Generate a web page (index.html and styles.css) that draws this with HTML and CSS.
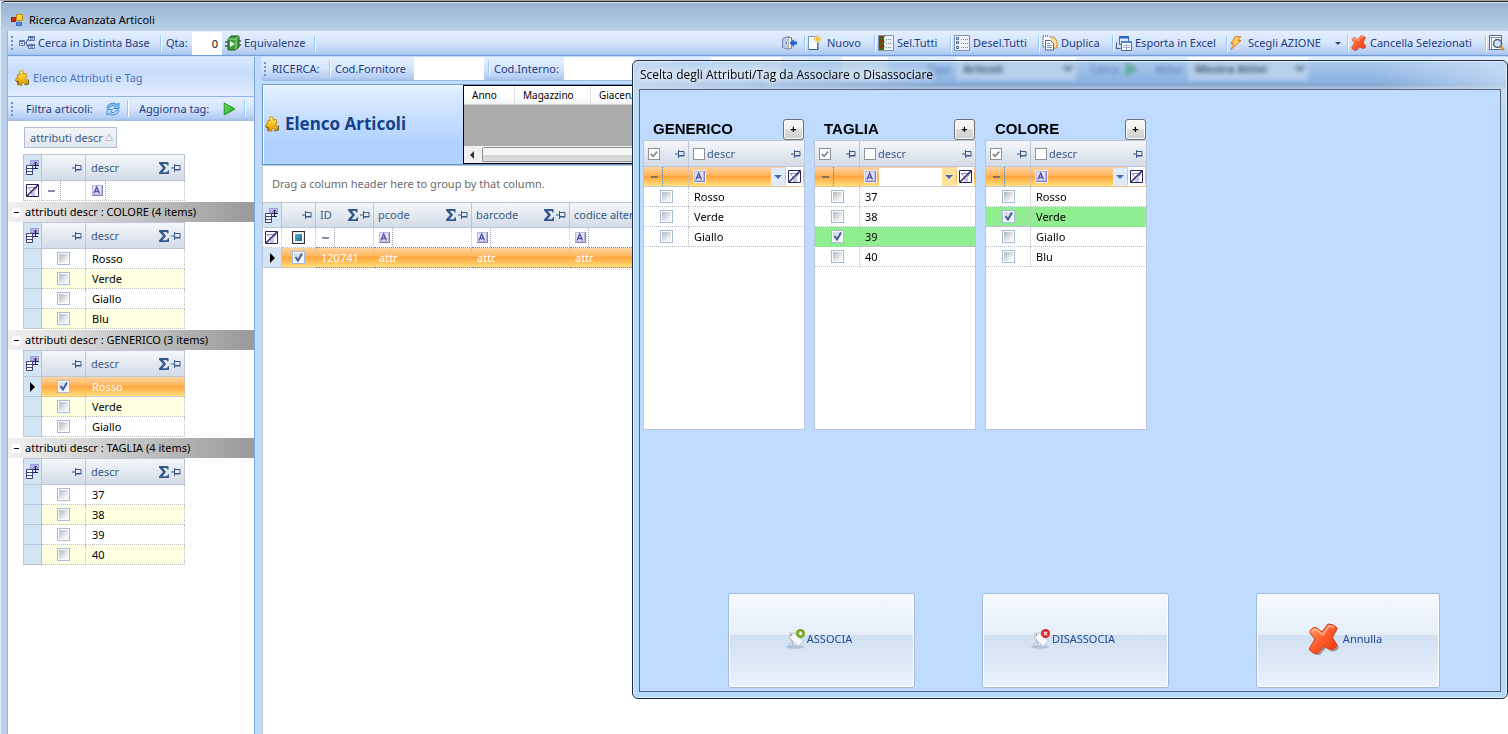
FILE: index.html
```html
<!DOCTYPE html>
<html lang="it">
<head>
<meta charset="utf-8">
<title>Ricerca Avanzata Articoli</title>
<link rel="stylesheet" href="styles.css">
</head>
<body>
<svg class="defs" aria-hidden="true">
  <defs>
    <linearGradient id="gold" x1="0" y1="0" x2="0" y2="1"><stop offset="0" stop-color="#ffec70"/><stop offset=".5" stop-color="#f7c31e"/><stop offset="1" stop-color="#cf9206"/></linearGradient>
    <linearGradient id="red" x1="0" y1="0" x2="1" y2="1"><stop offset="0" stop-color="#ffb27a"/><stop offset=".5" stop-color="#ff5a2a"/><stop offset="1" stop-color="#f03a0c"/></linearGradient>
    <linearGradient id="green" x1="0" y1="0" x2="1" y2="1"><stop offset="0" stop-color="#7be07b"/><stop offset="1" stop-color="#149a14"/></linearGradient>
    <symbol id="pin" viewBox="0 0 10 8"><path d="M0 4h3M3.500 0v8M4 1.500h5v4H4M4 6h5.500" fill="none" stroke="#3b5b85"/></symbol>
    <symbol id="sum" viewBox="0 0 10 12"><path d="M0 0h9.500v3.500H8.500L7.500 2H4l3 4-3.500 4.200h4.500l1-2H10V12H0v-1.500L4 6 0 1.500z" fill="#35598a"/></symbol>
    <symbol id="chooser" viewBox="0 0 14 15"><path d="M4.500 .5h8v4h-8z" fill="#b9b4e8" stroke="#a09bd8"/><path d="M3.500 5.500H13" stroke="#222255"/><path d="M.5 5.500h6v9h-6z" fill="#fff" stroke="#45407f"/><path d="M1 8.500h5M1 11.500h5" stroke="#45407f"/><path d="M7 8.500h5M9.500 2v6M8 3.500l1.500-1.500L11 3.500" fill="none" stroke="#222255"/></symbol>
    <symbol id="clear" viewBox="0 0 13 13"><path d="M.5 .5h12v12H.5z" fill="#fff" stroke="#26225c"/><path d="M2 3.500h9L8 7.500V12M6 12V8L2 3.500" fill="none" stroke="#8f8ccb"/><path d="M1 12L12 1" stroke="#26225c" stroke-width="1.400"/></symbol>
    <symbol id="alpha" viewBox="0 0 11 11"><path d="M.5 .5h9v9h-9z" fill="#e2e1f5" stroke="#b9b8dd"/><path d="M2 8.500L4.700 2 7.500 8.500M3 6.500h3.500" fill="none" stroke="#5552a5" stroke-width="1.400"/><path d="M0 10.500h11M10.500 0v11" stroke="#8380c0"/></symbol>
    <symbol id="puzzle" viewBox="0 0 14 16"><path d="M2.500 6.500L2 5l3.200-.6C3.500 2.200 4.500.6 6.300.6S9 2.300 8 4l3.300-.5.7 3.800c-2.300-.4-2.600 2.700-.3 2.600l1.600-.3.200 4.200-3.900.8c.6-2.500-2.800-2.800-2.700-.3l.2 1-4.300-.5.5-3.200c-1.700.4-3-.5-2.600-2S1.600 7.800 2.500 8.300z" fill="url(#gold)" stroke="#b47b08" stroke-width=".8"/><path d="M2.800 14.800l.5-3.200M.8 10.400Q1.600 12 3.300 11.600" fill="none" stroke="#8a3d0c"/><path d="M9.800 14.800l3.700-.8v-4" fill="none" stroke="#6b5c2c"/></symbol>
    <symbol id="cross" viewBox="0 0 30 32"><path d="M2 8Q5 4 8 6l5 3 6-8q6 0 9 4l-5 9 6 9q-3 6-8 4l-5-3-6 7q-6 1-9-4l6-10-6-7q-1-1-1-2z" transform="translate(1 1)" fill="#7d5349" opacity=".55"/><path d="M1 8Q4 3 8 5l5 4 6-8q6 0 9 4l-5 9 5 8q-3 6-8 4l-5-3-6 7q-6 1-9-4l6-10-5-6z" fill="url(#red)" stroke="#d9381a"/><path d="M3 8q3-2 5-1l6 5 6-9q4 0 5 2" fill="none" stroke="#ffc6a3" stroke-width="1.500" opacity=".8"/></symbol>
    <symbol id="play" viewBox="0 0 12 14"><path d="M.7 1v12L11.500 7z" fill="url(#green)" stroke="#1d9420"/></symbol>
    <symbol id="tag" viewBox="0 0 19 20"><ellipse cx="9" cy="18" rx="9" ry="1.800" fill="#9fb0c4" opacity=".6"/><path d="M3.500 4h5l9 8-5.500 5.500-8-8z" fill="#f4f7fb" stroke="#b5bfcb"/><path d="M5 14c-4 1-3 5 0 3.500s1-5-.5-8" fill="none" stroke="#a9b5c2"/><circle cx="5.500" cy="6" r=".8" fill="#555"/></symbol>
  </defs>
</svg>

<div class="window">
  <header class="titlebar">
    <svg width="13" height="12" viewBox="0 0 13 12"><path d="M5.500.5h6v6h-6z" fill="#ffcf3f" stroke="#b98a12"/><path d="M.5 3.500h4v4h-4z" fill="#d43416" stroke="#8f1b08"/><path d="M5.500 8.500h5v3h-5z" fill="#5f94e8" stroke="#3468b8"/></svg>
    <h1>Ricerca Avanzata Articoli</h1>
  </header>

  <div class="frame">
    <nav class="toolbar main-bar">
      <i class="grip"></i>
      <button class="tool w-distinta"><svg width="16" height="14" viewBox="0 0 16 14"><path d="M.5 4.500h5v5h-5zM9.500 .5h6v4h-6zM9.500 8.500h6v4h-6z" fill="#dbe8fb" stroke="#5a77ac"/><path d="M1 5.500h4M10 1.500h5M10 9.500h5" stroke="#5a77ac"/><path d="M2 7.500h2M11 3h3M11 11h3" stroke="#2f5fa8"/><path d="M6 7h1l2-4M7 7l2 4" fill="none" stroke="#555"/></svg>Cerca in Distinta Base</button>
      <i class="sep"></i>
      <label class="tool-label" for="qta">Qta:</label>
      <input id="qta" class="qty" type="text" value="0">
      <button class="tool w-equiv"><svg width="16" height="16" viewBox="0 0 16 16"><path d="M3 4l3-3h8v11l-3 3H3z" fill="#3f9a3f" stroke="#165c1c"/><path d="M3 4h8v11M11 4l3-3" fill="none" stroke="#9bdb8f"/><path d="M5 6v6l5-3z" fill="#e9ffe2"/><path d="M0 7h3M0 11h3M14 6h2M14 10h2" stroke="#555" stroke-width="1.500"/></svg>Equivalenze</button>
      <i class="sep"></i>
      <div class="actions">
        <button class="tool w-exit" aria-label="Esci"><svg width="16" height="16" viewBox="0 0 16 16"><path d="M1.500 3.500l6-2v13l-6-2z" fill="#b9cdec" stroke="#7188b8"/><path d="M7.500 2.500h3v11h-3" fill="#f5ecc0" stroke="#8f865e"/><path d="M5 8h1" stroke="#333"/><path d="M16 6.500h-3V4L8.500 8 13 12V9.500h3z" fill="#1c60dd"/></svg></button>
        <i class="sep"></i>
        <button class="tool w-nuovo"><svg width="14" height="16" viewBox="0 0 14 16"><path d="M.5 1.500h9v13h-9z" fill="#f4f8ff" stroke="#8194b6"/><path d="M.5 14.500h9.500V5" fill="none" stroke="#475a82"/><circle cx="9.500" cy="4" r="3" fill="#ffe98d"/><path d="M9.500 0v8M5.500 4h8M7 1.500l5 5M12 1.500l-5 5" stroke="#f1b92c"/></svg>Nuovo</button>
        <i class="sep"></i>
        <button class="tool w-sel"><svg width="16" height="16" viewBox="0 0 16 16"><path d="M.5 .5h15v15H.5z" fill="#eef3fb" stroke="#8791a5"/><path d="M1 1h5v14H1z" fill="#9b2d10"/><path d="M1.500 3l1.500 1.500L6.500 1M1.500 8l1.500 1.500L6.500 6M1.500 13l1.500 1.500L6.500 11" fill="none" stroke="#2c7c20" stroke-width="1.500"/><path d="M8 4.500h6M8 8.500h6M8 12.500h6" stroke="#7d8797" stroke-dasharray="1 1"/></svg>Sel.Tutti</button>
        <i class="sep"></i>
        <button class="tool w-desel"><svg width="16" height="16" viewBox="0 0 16 16"><path d="M.5 .5h15v15H.5z" fill="#eef3fb" stroke="#8791a5"/><path d="M2.500 2.500h2v2h-2zM2.500 6.500h2v2h-2zM2.500 11.500h2v2h-2z" fill="#fff" stroke="#40659d"/><path d="M7 4.500h7M7 8.500h7M7 12.500h7" stroke="#7d8797" stroke-dasharray="1 1"/></svg>Desel.Tutti</button>
        <i class="sep"></i>
        <button class="tool w-dup"><svg width="16" height="16" viewBox="0 0 16 16"><path d="M1 1h6l3 3v8H1z" fill="#fff" stroke="#222" stroke-dasharray="1 1"/><path d="M9 2h3l3 4v7h-4" fill="#ffe09a" stroke="#c08a30"/><path d="M3.500 5.500h5l3 3v6.500h-8z" fill="#f7faff" stroke="#52658b"/><path d="M5 8.500h3M5 10.500h5M5 12.500h5" stroke="#7890b8"/></svg>Duplica</button>
        <i class="sep"></i>
        <button class="tool w-excel"><svg width="16" height="15" viewBox="0 0 16 15"><path d="M3.500.5h9v8h-9z" fill="#dceaff" stroke="#3a68b5"/><path d="M3 1.500h10" stroke="#2e63c4" stroke-width="2"/><path d="M.5 6.500v6h4" fill="none" stroke="#556"/><path d="M5.500 5.500h10v9h-10z" fill="#fff" stroke="#52658b"/><path d="M5 6h11" stroke="#4f83d2" stroke-width="2"/><path d="M7 9.500h7M7 11.500h7M10.500 8v6" stroke="#9db0ce"/></svg>Esporta in Excel</button>
        <i class="sep"></i>
        <button class="tool w-azione"><svg width="12" height="14" viewBox="0 0 12 14"><path d="M5 1l6-1-3 4.500h3L1 13.500 4 7.500H1z" fill="#ffd65a" stroke="#e0702a"/></svg>Scegli AZIONE<b class="down"></b></button>
        <i class="sep"></i>
        <button class="tool w-canc"><svg width="16" height="16"><use href="#cross"/></svg>Cancella Selezionati</button>
        <i class="sep"></i>
        <button class="tool w-find" aria-label="Anteprima"><svg width="16" height="16" viewBox="0 0 16 16"><path d="M.5 .5h12v14H.5z" fill="#fff" stroke="#5b6a86"/><path d="M1 2.500h11M2.500 3v11" stroke="#8796b1"/><circle cx="8.500" cy="8.500" r="4" fill="#cfe4f8" stroke="#4b5d7c" stroke-width="1.500"/><path d="M11.500 11.500l3.500 3.500" stroke="#d19531" stroke-width="2.500"/></svg></button>
      </div>
    </nav>

    <div class="body">
      <aside class="side">
        <h2 class="side-title"><svg width="14" height="16"><use href="#puzzle"/></svg>Elenco Attributi e Tag</h2>
        <div class="toolbar side-bar">
          <i class="grip"></i>
          <button class="tool w-filtra">Filtra articoli:<svg width="16" height="16" viewBox="0 0 16 16"><path d="M2 7a6 5.500 0 0 1 10-3.500L14 2v5.500H8.500L10.500 5A4 3.500 0 0 0 4.500 7z" fill="#85c4f5" stroke="#2f78c4" stroke-width=".8"/><path d="M14 9a6 5.500 0 0 1-10 3.500L2 14V8.500h5.500L5.500 11a4 3.500 0 0 0 6-2z" fill="#b5dcfa" stroke="#2f78c4" stroke-width=".8"/></svg></button>
          <i class="sep"></i>
          <button class="tool w-aggiorna">Aggiorna tag:<svg width="13" height="14"><use href="#play"/></svg></button>
          <i class="sep"></i>
        </div>
        <div class="side-body">
          <button class="chip">attributi descr<svg width="8" height="7" viewBox="0 0 8 7"><path d="M4 .5L7.500 6.500H.5z" fill="#f4f6f9" stroke="#b8c0cc"/></svg></button>
          <table class="grid side-grid">
            <colgroup><col class="c-row"><col class="c-check"><col></colgroup>
            <thead><tr><th><svg width="14" height="15"><use href="#chooser"/></svg></th><th><div class="hd"><svg class="pin" width="10" height="8"><use href="#pin"/></svg></div></th><th><div class="hd">descr<svg class="sum" width="10" height="12"><use href="#sum"/></svg><svg width="10" height="8"><use href="#pin"/></svg></div></th></tr></thead>
            <tbody><tr><td class="plain"><svg width="13" height="13"><use href="#clear"/></svg></td><td><div class="op"><i class="minus"></i></div></td><td><div class="op"><svg width="11" height="11"><use href="#alpha"/></svg></div></td></tr></tbody>
          </table>

          <button class="group"><i class="collapse"></i>attributi descr : COLORE (4 items)</button>
          <table class="grid side-grid">
            <colgroup><col class="c-row"><col class="c-check"><col></colgroup>
            <thead><tr><th><svg width="14" height="15"><use href="#chooser"/></svg></th><th><div class="hd"><svg class="pin" width="10" height="8"><use href="#pin"/></svg></div></th><th><div class="hd">descr<svg class="sum" width="10" height="12"><use href="#sum"/></svg><svg width="10" height="8"><use href="#pin"/></svg></div></th></tr></thead>
            <tbody>
              <tr><td></td><td><input type="checkbox" id="c1"></td><td><label for="c1">Rosso</label></td></tr>
              <tr class="alt"><td></td><td><input type="checkbox" id="c2"></td><td><label for="c2">Verde</label></td></tr>
              <tr><td></td><td><input type="checkbox" id="c3"></td><td><label for="c3">Giallo</label></td></tr>
              <tr class="alt"><td></td><td><input type="checkbox" id="c4"></td><td><label for="c4">Blu</label></td></tr>
            </tbody>
          </table>

          <button class="group"><i class="collapse"></i>attributi descr : GENERICO (3 items)</button>
          <table class="grid side-grid">
            <colgroup><col class="c-row"><col class="c-check"><col></colgroup>
            <thead><tr><th><svg width="14" height="15"><use href="#chooser"/></svg></th><th><div class="hd"><svg class="pin" width="10" height="8"><use href="#pin"/></svg></div></th><th><div class="hd">descr<svg class="sum" width="10" height="12"><use href="#sum"/></svg><svg width="10" height="8"><use href="#pin"/></svg></div></th></tr></thead>
            <tbody>
              <tr class="current"><td><i class="cursor"></i></td><td><input type="checkbox" id="g1" checked></td><td><label for="g1">Rosso</label></td></tr>
              <tr class="alt"><td></td><td><input type="checkbox" id="g2"></td><td><label for="g2">Verde</label></td></tr>
              <tr><td></td><td><input type="checkbox" id="g3"></td><td><label for="g3">Giallo</label></td></tr>
            </tbody>
          </table>

          <button class="group"><i class="collapse"></i>attributi descr : TAGLIA (4 items)</button>
          <table class="grid side-grid">
            <colgroup><col class="c-row"><col class="c-check"><col></colgroup>
            <thead><tr><th><svg width="14" height="15"><use href="#chooser"/></svg></th><th><div class="hd"><svg class="pin" width="10" height="8"><use href="#pin"/></svg></div></th><th><div class="hd">descr<svg class="sum" width="10" height="12"><use href="#sum"/></svg><svg width="10" height="8"><use href="#pin"/></svg></div></th></tr></thead>
            <tbody>
              <tr><td></td><td><input type="checkbox" id="t1"></td><td><label for="t1">37</label></td></tr>
              <tr class="alt"><td></td><td><input type="checkbox" id="t2"></td><td><label for="t2">38</label></td></tr>
              <tr><td></td><td><input type="checkbox" id="t3"></td><td><label for="t3">39</label></td></tr>
              <tr class="alt"><td></td><td><input type="checkbox" id="t4"></td><td><label for="t4">40</label></td></tr>
            </tbody>
          </table>
        </div>
      </aside>

      <main class="content">
        <div class="toolbar search-bar">
          <i class="grip"></i>
          <span class="tool-label w-ric">RICERCA:</span>
          <i class="sep"></i>
          <label class="tool-label w-forn" for="forn">Cod.Fornitore</label>
          <input id="forn" type="text">
          <i class="sep"></i>
          <label class="tool-label w-int" for="interno">Cod.Interno:</label>
          <input id="interno" type="text">
          <i class="sep gap-l"></i>
          <input id="desc" type="text" aria-label="Descrizione">
          <i class="sep gap-m"></i>
          <input id="barre" class="short" type="text" aria-label="Barcode">
          <label class="tool-label w-tipo" for="tipo">Tipo:</label>
          <select id="tipo"><option>Articoli</option></select>
          <button class="tool w-cerca">Cerca<svg width="13" height="14"><use href="#play"/></svg></button>
          <label class="tool-label" for="attivi">Attivi:</label>
          <select id="attivi"><option>Mostra Attivi</option></select>
        </div>

        <section class="banner">
          <h2><svg width="14" height="16"><use href="#puzzle"/></svg>Elenco Articoli</h2>
          <div class="stock">
            <table>
              <thead><tr><th>Anno</th><th>Magazzino</th><th>Giacenza</th><th></th></tr></thead>
            </table>
            <div class="scroll"><i class="scroll-left"></i><i class="thumb"></i></div>
          </div>
        </section>

        <section class="results">
          <p class="hint">Drag a column header here to group by that column.</p>
          <table class="grid wide-grid">
            <colgroup><col class="r-row"><col class="r-check"><col class="r-id"><col class="r-code"><col class="r-code"><col></colgroup>
            <thead><tr>
              <th><svg width="14" height="15"><use href="#chooser"/></svg></th>
              <th><div class="hd"><svg class="pin" width="10" height="8"><use href="#pin"/></svg></div></th>
              <th><div class="hd">ID<svg class="sum" width="10" height="12"><use href="#sum"/></svg><svg width="10" height="8"><use href="#pin"/></svg></div></th>
              <th><div class="hd">pcode<svg class="sum" width="10" height="12"><use href="#sum"/></svg><svg width="10" height="8"><use href="#pin"/></svg></div></th>
              <th><div class="hd">barcode<svg class="sum" width="10" height="12"><use href="#sum"/></svg><svg width="10" height="8"><use href="#pin"/></svg></div></th>
              <th><div class="hd">codice alternativo</div></th>
            </tr></thead>
            <tbody>
              <tr class="search-row">
                <td class="plain"><svg width="13" height="13"><use href="#clear"/></svg></td>
                <td><input type="checkbox" class="mixed" aria-label="Filtro selezione"></td>
                <td><div class="op"><i class="minus"></i></div></td>
                <td><div class="op"><svg width="11" height="11"><use href="#alpha"/></svg></div></td>
                <td><div class="op"><svg width="11" height="11"><use href="#alpha"/></svg></div></td>
                <td><div class="op"><svg width="11" height="11"><use href="#alpha"/></svg></div></td>
              </tr>
              <tr class="current"><td><i class="cursor"></i></td><td><input type="checkbox" checked aria-label="Seleziona 120741"></td><td>120741</td><td>attr</td><td>attr</td><td>attr</td></tr>
            </tbody>
          </table>
        </section>
      </main>
    </div>
  </div>

  <div class="dialog" role="dialog" aria-labelledby="dlg-title">
    <h2 id="dlg-title" class="dialog-title">Scelta degli Attributi/Tag da Associare o Disassociare</h2>
    <div class="dialog-body">
      <div class="lists">
        <section class="list">
          <div class="list-head"><h3>GENERICO</h3><button class="plus" aria-label="Aggiungi GENERICO">+</button></div>
          <div class="list-box">
            <table class="grid pick">
              <colgroup><col class="p-check"><col></colgroup>
              <thead><tr><th><div class="hd"><input type="checkbox" class="flat" checked aria-label="Tutti"><svg class="pin" width="10" height="8"><use href="#pin"/></svg></div></th><th><div class="hd"><input type="checkbox" class="flat" id="pg0"><label for="pg0">descr</label><svg class="pin" width="10" height="8"><use href="#pin"/></svg></div></th></tr></thead>
              <tbody>
                <tr class="filter"><td><div class="op"><i class="minus"></i></div></td><td><div class="combo"><svg width="11" height="11"><use href="#alpha"/></svg><input type="text" aria-label="Filtro descr"><button class="drop" aria-label="Apri"></button><button class="clear" aria-label="Azzera"><svg width="13" height="13"><use href="#clear"/></svg></button></div></td></tr>
                <tr><td><input type="checkbox" id="pg1"></td><td><label for="pg1">Rosso</label></td></tr>
                <tr><td><input type="checkbox" id="pg2"></td><td><label for="pg2">Verde</label></td></tr>
                <tr><td><input type="checkbox" id="pg3"></td><td><label for="pg3">Giallo</label></td></tr>
              </tbody>
            </table>
          </div>
        </section>
        <section class="list">
          <div class="list-head"><h3>TAGLIA</h3><button class="plus" aria-label="Aggiungi TAGLIA">+</button></div>
          <div class="list-box">
            <table class="grid pick">
              <colgroup><col class="p-check"><col></colgroup>
              <thead><tr><th><div class="hd"><input type="checkbox" class="flat" checked aria-label="Tutti"><svg class="pin" width="10" height="8"><use href="#pin"/></svg></div></th><th><div class="hd"><input type="checkbox" class="flat" id="pt0"><label for="pt0">descr</label><svg class="pin" width="10" height="8"><use href="#pin"/></svg></div></th></tr></thead>
              <tbody>
                <tr class="filter"><td><div class="op"><i class="minus"></i></div></td><td><div class="combo editing"><svg width="11" height="11"><use href="#alpha"/></svg><input type="text" aria-label="Filtro descr"><button class="drop" aria-label="Apri"></button><button class="clear" aria-label="Azzera"><svg width="13" height="13"><use href="#clear"/></svg></button></div></td></tr>
                <tr><td><input type="checkbox" id="pt1"></td><td><label for="pt1">37</label></td></tr>
                <tr><td><input type="checkbox" id="pt2"></td><td><label for="pt2">38</label></td></tr>
                <tr class="picked"><td><input type="checkbox" id="pt3" checked></td><td><label for="pt3">39</label></td></tr>
                <tr><td><input type="checkbox" id="pt4"></td><td><label for="pt4">40</label></td></tr>
              </tbody>
            </table>
          </div>
        </section>
        <section class="list">
          <div class="list-head"><h3>COLORE</h3><button class="plus" aria-label="Aggiungi COLORE">+</button></div>
          <div class="list-box">
            <table class="grid pick">
              <colgroup><col class="p-check"><col></colgroup>
              <thead><tr><th><div class="hd"><input type="checkbox" class="flat" checked aria-label="Tutti"><svg class="pin" width="10" height="8"><use href="#pin"/></svg></div></th><th><div class="hd"><input type="checkbox" class="flat" id="pc0"><label for="pc0">descr</label><svg class="pin" width="10" height="8"><use href="#pin"/></svg></div></th></tr></thead>
              <tbody>
                <tr class="filter"><td><div class="op"><i class="minus"></i></div></td><td><div class="combo"><svg width="11" height="11"><use href="#alpha"/></svg><input type="text" aria-label="Filtro descr"><button class="drop" aria-label="Apri"></button><button class="clear" aria-label="Azzera"><svg width="13" height="13"><use href="#clear"/></svg></button></div></td></tr>
                <tr><td><input type="checkbox" id="pc1"></td><td><label for="pc1">Rosso</label></td></tr>
                <tr class="picked"><td><input type="checkbox" id="pc2" checked></td><td><label for="pc2">Verde</label></td></tr>
                <tr><td><input type="checkbox" id="pc3"></td><td><label for="pc3">Giallo</label></td></tr>
                <tr><td><input type="checkbox" id="pc4"></td><td><label for="pc4">Blu</label></td></tr>
              </tbody>
            </table>
          </div>
        </section>
      </div>
      <footer class="choices">
        <button class="big"><svg width="19" height="20" viewBox="0 0 19 20"><use href="#tag" width="19" height="20"/><circle cx="14.500" cy="4.500" r="4.500" fill="#76a71d"/><path d="M14.500 2.500v4M12.500 4.500h4" stroke="#fff" stroke-width="1.500"/></svg>ASSOCIA</button>
        <button class="big"><svg width="19" height="20" viewBox="0 0 19 20"><use href="#tag" width="19" height="20"/><circle cx="14.500" cy="4.500" r="4.500" fill="#d8262c"/><path d="M12.800 2.800l3.400 3.400M16.200 2.800l-3.400 3.400" stroke="#ffd5d5" stroke-width="1.300"/></svg>DISASSOCIA</button>
        <button class="big cancel"><svg width="30" height="32"><use href="#cross"/></svg>Annulla</button>
      </footer>
    </div>
  </div>
</div>
</body>
</html>
```

FILE: styles.css
```css
* { box-sizing: border-box; }

body {
  margin: 0;
  font-family: "Noto Sans", "Open Sans", sans-serif;
  font-size: 11px;
  line-height: 16px;
  color: #000;
}

h1, h2, h3, p { margin: 0; font-size: inherit; font-weight: normal; }
button, input, select { font: inherit; color: inherit; margin: 0; padding: 0; border: 0; border-radius: 0; background: none; }
button { display: inline-flex; align-items: center; white-space: nowrap; }
svg { flex: none; display: block; }
.defs { position: absolute; width: 0; height: 0; }

.window {
  position: relative;
  min-height: 100vh;
  display: flex;
  flex-direction: column;
  background: #b9d1ea;
  border-top: 1px solid #a8a8a4;
  border-left: 1px solid #e4eef8;
  overflow: hidden;
}

.titlebar {
  display: flex;
  align-items: center;
  gap: 5px;
  height: 30px;
  padding: 7px 10px 0;
  border-top: 1px solid #222;
  box-shadow: inset 0 1px #d9e6f4;
  background: linear-gradient(#97b2d0, #b9d1ea);
  border-top-left-radius: 5px;
}

.frame { flex: 1; display: flex; flex-direction: column; margin-left: 6px; border-left: 1px solid #8fb2e2; background: #bfdbff; }

/* toolbars */
.toolbar {
  display: flex;
  align-items: center;
  background: linear-gradient(#e3efff, #d5e5fb 50%, #b4cdf3 90%, #a3c0ec);
  color: #1e3c83;
}
.main-bar { height: 25px; border-bottom: 1px solid #6f9ddb; }
.grip { flex: none; width: 2px; height: 14px; margin: 0 6px 0 3px; background: repeating-linear-gradient(#7590c2 0 2px, transparent 2px 4px); }
.sep { flex: none; width: 2px; height: 17px; background: linear-gradient(90deg, #9ac6ff 50%, #fff 50%); }
.tool { flex: none; gap: 3px; height: 22px; }
.tool-label { flex: none; padding: 0 4px; }
.toolbar input, .toolbar select { background: #fff; height: 23px; color: #111; }
.toolbar .qty { width: 30px; padding-right: 4px; text-align: right; margin-right: 3px; }
.actions { display: flex; align-items: center; margin-left: auto; }
.w-distinta { width: 141px; }
.main-bar .tool-label { width: 30px; }
.w-equiv { width: 89px; }
.w-exit { width: 23px; }
.actions .tool:not(.w-exit) { padding-left: 2px; }
.actions .w-nuovo { width: 68px; padding-left: 6px; gap: 5px; }
.actions .w-sel { width: 74px; }
.actions .w-desel { width: 86px; }
.actions .w-dup { width: 72px; padding-left: 3px; }
.actions .w-excel { width: 112px; }
.actions .w-azione { width: 119px; padding-left: 4px; gap: 6px; }
.w-canc { width: 136px; }
.w-find { width: 21px; }
.down { margin-left: auto; margin-right: 6px; border: 3px solid transparent; border-top-color: #24457f; border-bottom: 0; }

.body { flex: 1; display: flex; padding-top: 1px; }

/* left panel */
.side { flex: none; width: 247px; display: flex; flex-direction: column; border-right: 1px solid #7fa6dd; background: #fff; }
.side-title {
  display: flex; align-items: center; gap: 4px;
  height: 40px; padding: 3px 6px 0 7px;
  color: #5272b6;
  background: linear-gradient(#dbe9fd, #c5dcfb 40%, #e1edff);
  border-bottom: 1px solid #8db5ec;
}
.side-bar { height: 24px; border-bottom: 1px solid #a5bde4; }
.w-filtra { width: 108px; padding-left: 7px; gap: 12px; }
.w-aggiorna { width: 115px; padding-left: 10px; gap: 14px; }
.side-body { padding-top: 6px; }
.chip {
  gap: 2px; height: 21px; margin: 0 0 6px 16px; padding: 0 3px 0 5px;
  border: 1px solid #b3bfd0; background: linear-gradient(#f3f5f8, #e2e8ef); color: #3b5b85;
}
.group {
  display: flex; gap: 5px; width: 100%; height: 20px; padding-left: 4px;
  background: linear-gradient(90deg, #f1f1f1, #999);
}
.collapse { width: 8px; height: 9px; background: linear-gradient(#000, #000) center / 5px 1px no-repeat #fff; }

/* grids */
.grid { table-layout: fixed; border-collapse: separate; border-spacing: 0; }
.grid th, .grid td { padding: 0 5px; text-align: left; font-weight: normal; white-space: nowrap; overflow: hidden; }
.grid th {
  height: 26px;
  border: solid #bcc6d6; border-width: 1px 1px 1px 0;
  background: linear-gradient(#f4f7fa, #d3dbe7);
  color: #3b5b85;
}
.grid td { height: 20px; line-height: 16px; border: dotted #b9bfc8; border-width: 0 1px 1px 0; }
.grid label { display: block; }
.hd { display: flex; align-items: center; }
.hd .pin, .hd .sum { margin-left: auto; }
.hd .sum { margin-right: 2px; }
.grid th .hd { margin-right: -2px; }
.c-row { width: 18px; }
.c-check { width: 44px; }
.side-grid, .wide-grid { border-left: 1px solid #bcc6d6; }
.side-grid { width: 162px; margin: 0 0 1px 15px; }
.grid.side-grid th { height: 27px; }
.side-grid th:first-child, .wide-grid th:first-child { padding: 0 2px; background: #d3e4f3; }
.side-grid td:first-child, .wide-grid td:first-child { padding: 0 2px; background: #d3e4f3; border-style: solid; border-color: #b3c6da; }
.grid td.plain:first-child { background: #fff; border-style: dotted; }
.side-grid td:nth-child(3) { padding-left: 6px; }
.wide-grid th { padding-left: 4px; }
.alt td { background: #ffffe1; }
.grid .current td:not(:first-child) {
  background: linear-gradient(#ffd3a0, #ffb862 40%, #ffa53d 50%, #ffe07c);
  color: #fff;
}
.cursor { display: block; width: 0; margin: 0 auto; border: 5px solid transparent; border-left-color: #000; border-right: 0; }
.op { display: flex; align-items: center; width: 14px; height: 19px; border-right: 1px dotted #a0a0a0; }
.minus { width: 7px; height: 2px; margin-left: 1px; background: #8d8aa5; }

input[type="checkbox"] {
  appearance: none; display: block; width: 13px; height: 13px; margin: 0 auto;
  border: 1px solid #a3bbdc;
  background: linear-gradient(135deg, #a9b1bc, #f6f6f6 75%);
  background-clip: content-box; background-color: #eef3f9; padding: 1px;
  box-shadow: inset 0 0 0 1px #fff;
}
input[type="checkbox"]:checked {
  background: url("data:image/svg+xml,%3Csvg xmlns='http://www.w3.org/2000/svg' viewBox='0 0 11 11'%3E%3Cpath d='M2.500 5L5 8.500 9 1.500' fill='none' stroke='%233d5f9b' stroke-width='2'/%3E%3C/svg%3E") center / 11px no-repeat, linear-gradient(135deg, #ccd2da, #fff);
}
input[type="checkbox"].mixed { border-color: #333; background: linear-gradient(135deg, #67bde0, #055c94); background-clip: content-box; padding: 2px; box-shadow: inset 0 0 0 1px #dfe6ec; }
input[type="checkbox"].flat { flex: none; width: 12px; height: 12px; margin: 0; background: #fff; border-color: #8e9298; box-shadow: none; }
input[type="checkbox"].flat:checked {
  background: url("data:image/svg+xml,%3Csvg xmlns='http://www.w3.org/2000/svg' viewBox='0 0 11 11'%3E%3Cpath d='M2 5.500L4.500 8 9 3' fill='none' stroke='%23888' stroke-width='2'/%3E%3C/svg%3E") center / 10px no-repeat #fff;
}

/* right side */
.content { flex: 1; min-width: 0; display: flex; flex-direction: column; margin-left: 6px; }
.search-bar { height: 24px; border-bottom: 1px solid #9dbbe8; border-bottom-left-radius: 3px; overflow: hidden; }
.search-bar > input { flex: none; width: 70px; margin-right: 4px; }
.search-bar > .short { width: 46px; }
.search-bar > select { flex: none; width: 120px; padding-left: 3px; font-weight: bold; }
.w-ric { width: 57px; padding-left: 0; }
.w-forn { width: 83px; }
.w-int { width: 74px; }
.gap-l { margin-right: 71px; }
.gap-m { margin-right: 55px; }
.w-tipo { width: 64px; text-align: right; }
.w-cerca { width: 75px; padding-left: 14px; gap: 6px; }
.banner { display: flex; height: 81px; margin: 3px 0 0 1px; border: 1px solid #6596d8; background: linear-gradient(#e3efff, #afd2ff 75%); }
.banner h2 { flex: none; display: flex; align-items: center; gap: 6px; width: 200px; padding: 0 0 2px 2px; font-size: 17px; font-weight: bold; color: #15428b; box-shadow: inset 1px 1px #fff; }
.stock { flex: 1; display: flex; flex-direction: column; border: 1px solid #000; background: #ababab; font-size: 10px; }
.stock table { width: 100%; border-spacing: 0; background: #fff; table-layout: fixed; }
.stock th { width: 76px; height: 19px; padding: 0 8px; font-weight: normal; text-align: left; border-right: 1px solid #e2e2e2; border-bottom: 1px solid #d5d5d5; background: linear-gradient(#fff 60%, #f1f2f4); }
.stock th:first-child { width: 51px; }
.stock th:last-child { width: auto; }
.scroll { display: flex; align-items: center; height: 17px; margin-top: auto; background: #f0f0f0; }
.scroll-left { margin: 0 8px 0 6px; border: 4px solid transparent; border-right-color: #333; border-left: 0; }
.thumb { flex: 1; height: 15px; border: 1px solid #8e8f92; border-radius: 2px; background: linear-gradient(#f5f5f5 50%, #d4d4d6 50%, #dcdcde); }

.results { flex: 1; margin-left: 1px; border: solid #bcc6d6; border-width: 1px 0 0 1px; background: #fff; }
.hint { height: 36px; padding: 10px 9px; color: #6a6a6a; }
.wide-grid { width: 100%; border-left: 0; }
.r-row { width: 19px; }
.r-check { width: 34px; }
.r-id { width: 58px; }
.r-code { width: 98px; }
.wide-grid .current td:nth-child(n+3), .search-row td:nth-child(n+3) { border-bottom-color: #3c8bd8; }

/* dialog over the window */
.dialog {
  position: absolute; left: 631px; right: 0; top: 59px; height: 639px;
  display: flex; flex-direction: column; padding: 0 6px 6px 6px;
  border: 1px solid #1d2c3f; border-radius: 6px;
  background:
    linear-gradient(90deg, #c3d8f0, rgba(110, 160, 215, .5) 35%, rgba(110, 160, 215, .5) 85%, rgba(190, 214, 240, .8)) top / 100% 28px no-repeat,
    linear-gradient(transparent 28px, #c9dcf0 28px, #b5dafa 60px);
  backdrop-filter: blur(2px);
  box-shadow: inset 0 0 0 1px #e1f0ff;
}
.dialog-title { height: 28px; padding: 6px 0 0 1px; font: 12px/16px "Open Sans", "Noto Sans", sans-serif; text-shadow: 0 0 8px #fff, 0 0 6px #fff; }
.dialog-body { flex: 1; display: flex; flex-direction: column; padding: 28px 3px 3px; border: 1px solid #56657a; background: #bfdbff; }
.lists { display: flex; gap: 9px; }
.list { width: 162px; }
.list-head { display: flex; align-items: center; justify-content: space-between; height: 22px; padding-left: 10px; }
.list-head h3 { font: bold 15px/20px "Liberation Sans", Arial, sans-serif; }
.plus {
  justify-content: center; width: 21px; height: 21px; margin-right: 1px; border: 1px solid #707070; border-radius: 3px;
  background: linear-gradient(#f3f3f3 50%, #dcdcdc 50%, #d0d0d0); box-shadow: inset 0 0 0 1px #fbfbfb; font-weight: bold;
}
.list-box { height: 290px; border: 1px solid #bcc6d6; background: #fff; }
.pick { width: 100%; }
.p-check { width: 45px; }
.grid.pick th { height: 26px; border-top: 0; }
.pick th:last-child, .pick td:last-child { border-right: 0; }
.pick .hd label { margin-left: 2px; }
.grid.pick th { padding-left: 4px; }
.pick .filter td {
  background: linear-gradient(#ffd3a0, #ffb862 40%, #ffa53d 50%, #ffe07c);
}
.pick .filter .op { border-right-color: #2f83cf; }
.pick .filter td:last-child { padding: 0 1px 0 5px; }
.pick .minus { margin-left: 2px; background: #8a6f5b; }
.combo { display: flex; align-items: center; height: 19px; }
.combo > svg { box-shadow: 0 0 0 1px #e9eef8; }
.combo input { flex: 1; min-width: 0; height: 18px; }
.combo .drop { width: 14px; height: 18px; background: #dfebfb; justify-content: center; }
.drop::before { content: ""; border: 4px solid transparent; border-top-color: #3f6cae; border-bottom: 0; }
.combo .clear { width: 17px; height: 19px; margin-left: 1px; justify-content: center; background: #fff; }
.editing input { background: #fff; margin-left: 3px; }
.combo.editing .drop { background: #ffe29a; }
.picked td { background: #90ee90; }

.choices { display: flex; margin-top: auto; padding: 0 57px 0 85px; }
.big {
  width: 187px; height: 95px; justify-content: center; gap: 2px; margin-right: 67px; padding: 0 5px 3px 0;
  border: 1px solid #a0bbd8; border-radius: 3px; box-shadow: inset 0 0 0 1px #fff;
  background: linear-gradient(#f5f9fe, #e6eef9 44%, #d0dff1 44%, #e9f2fd);
  color: #1e4a96;
}
.big.cancel { width: 184px; margin: 0 0 0 auto; gap: 4px; }
```
